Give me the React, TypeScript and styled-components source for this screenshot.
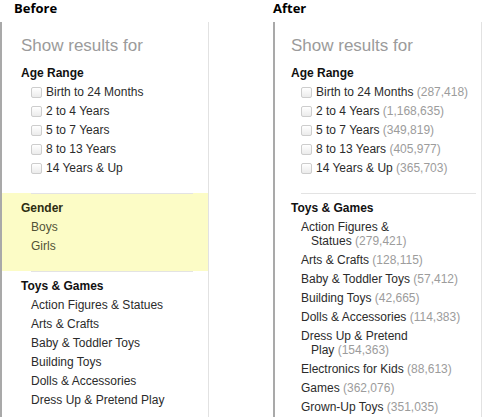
import styled, { createGlobalStyle } from "styled-components";

type Entry = { label: string; count?: string };

type GroupType = {
    title: string;
    entries: Entry[];
    checkbox?: boolean;
    highlight?: boolean;
};

const before: GroupType[] = [
    {
        title: "Age Range",
        checkbox: true,
        entries: [
            { label: "Birth to 24 Months" },
            { label: "2 to 4 Years" },
            { label: "5 to 7 Years" },
            { label: "8 to 13 Years" },
            { label: "14 Years & Up" },
        ],
    },
    {
        title: "Gender",
        highlight: true,
        entries: [{ label: "Boys" }, { label: "Girls" }],
    },
    {
        title: "Toys & Games",
        entries: [
            { label: "Action Figures & Statues" },
            { label: "Arts & Crafts" },
            { label: "Baby & Toddler Toys" },
            { label: "Building Toys" },
            { label: "Dolls & Accessories" },
            { label: "Dress Up & Pretend Play" },
        ],
    },
];

const after: GroupType[] = [
    {
        title: "Age Range",
        checkbox: true,
        entries: [
            { label: "Birth to 24 Months", count: "287,418" },
            { label: "2 to 4 Years", count: "1,168,635" },
            { label: "5 to 7 Years", count: "349,819" },
            { label: "8 to 13 Years", count: "405,977" },
            { label: "14 Years & Up", count: "365,703" },
        ],
    },
    {
        title: "Toys & Games",
        entries: [
            { label: "Action Figures & Statues", count: "279,421" },
            { label: "Arts & Crafts", count: "128,115" },
            { label: "Baby & Toddler Toys", count: "57,412" },
            { label: "Building Toys", count: "42,665" },
            { label: "Dolls & Accessories", count: "114,383" },
            { label: "Dress Up & Pretend Play", count: "154,363" },
            { label: "Electronics for Kids", count: "88,613" },
            { label: "Games", count: "362,076" },
            { label: "Grown-Up Toys", count: "351,035" },
        ],
    },
];

const Label = ({ label, count }: Entry) => (
    <>
        {label}
        {count && <Count>{"\u00a0(" + count + ")"}</Count>}
    </>
);

const Group = ({ title, entries, checkbox, highlight, first }: GroupType & { first: boolean }) => (
    <Section $highlight={highlight}>
        {!first && <Rule />}
        <GroupTitle>{title}</GroupTitle>
        <List>
            {entries.map((e) =>
                checkbox ? (
                    <CheckRow key={e.label}>
                        <Box />
                        <span>
                            <Label {...e} />
                        </span>
                    </CheckRow>
                ) : (
                    <Item key={e.label}>
                        <Label {...e} />
                    </Item>
                )
            )}
        </List>
    </Section>
);

type ColumnProps = {
    title: string;
    groups: GroupType[];
    indent: number;
    padLeft: number;
    padRight: number;
};

const Column = ({ title, groups, indent, padLeft, padRight }: ColumnProps) => (
    <Col>
        <Title $indent={indent}>{title}</Title>
        <Panel $padLeft={padLeft} $padRight={padRight}>
            <ShowResults>Show results for</ShowResults>
            {groups.map((g, i) => (
                <Group key={g.title} {...g} first={i === 0} />
            ))}
        </Panel>
    </Col>
);

export default function App() {
    return (
        <>
            <GlobalStyle />
            <Page>
                <Column title="Before" groups={before} indent={14} padLeft={19} padRight={15} />
                <Column title="After" groups={after} indent={0} padLeft={16} padRight={5} />
            </Page>
        </>
    );
}

const GlobalStyle = createGlobalStyle`
    html, body {
        margin: 0;
        background: #ffffff;
    }
    body {
        font-family: "Liberation Sans", Arial, sans-serif;
        overflow: hidden;
    }
`;

const Page = styled.div`
    display: flex;
    gap: 64px;
    height: 417px;
`;

const Col = styled.div`
    display: flex;
    flex-direction: column;
    width: 209px;
`;

const Title = styled.h2<{ $indent: number }>`
    margin: 0 0 6px;
    padding-left: ${(p) => p.$indent}px;
    font: 700 13px/16px "Open Sans", "Liberation Sans", sans-serif;
    color: #000000;
`;

const Panel = styled.aside<{ $padLeft: number; $padRight: number }>`
    --pad-l: ${(p) => p.$padLeft}px;
    --pad-r: ${(p) => p.$padRight}px;
    flex: 1;
    padding-top: 14px;
    border-left: 2px solid #a9a9a9;
    border-right: 1px solid #e2e2e2;
    overflow: hidden;
`;

const ShowResults = styled.h1`
    margin: 0 0 10px;
    padding-left: var(--pad-l);
    font-size: 17px;
    line-height: 20px;
    font-weight: 400;
    color: #9b9b9b;
`;

const Section = styled.section<{ $highlight?: boolean }>`
    --ink: ${(p) => (p.$highlight ? "#525236" : "#2b2b2b")};
    --ink-strong: ${(p) => (p.$highlight ? "#2d2d12" : "#111111")};
    padding: 0 var(--pad-r) 18px var(--pad-l);
    background: ${(p) => (p.$highlight ? "#fcfcc6" : "transparent")};
`;

const Rule = styled.hr`
    height: 0;
    margin: 0 0 7px 10px;
    border: 0;
    border-top: 1px solid #e3e3e3;
`;

const GroupTitle = styled.h3`
    margin: 0;
    font-size: 12px;
    line-height: 14px;
    font-weight: 700;
    color: var(--ink-strong);
`;

const List = styled.ul`
    display: flex;
    flex-direction: column;
    gap: 5px;
    margin: 5px 0 0 10px;
    padding: 0;
    list-style: none;
`;

const Item = styled.li`
    padding-left: 10px;
    text-indent: -10px;
    font-size: 12px;
    line-height: 14px;
    color: var(--ink);
`;

const CheckRow = styled.li`
    display: flex;
    align-items: center;
    font-size: 12px;
    line-height: 14px;
    color: var(--ink);
    white-space: nowrap;
`;

const Box = styled.span`
    flex: none;
    width: 9px;
    height: 9px;
    margin-right: 4px;
    border: 1px solid #cdcdcd;
    border-radius: 2px;
    background: linear-gradient(#ffffff, #ebebeb);
`;

const Count = styled.span`
    color: #9c9c9c;
`;
